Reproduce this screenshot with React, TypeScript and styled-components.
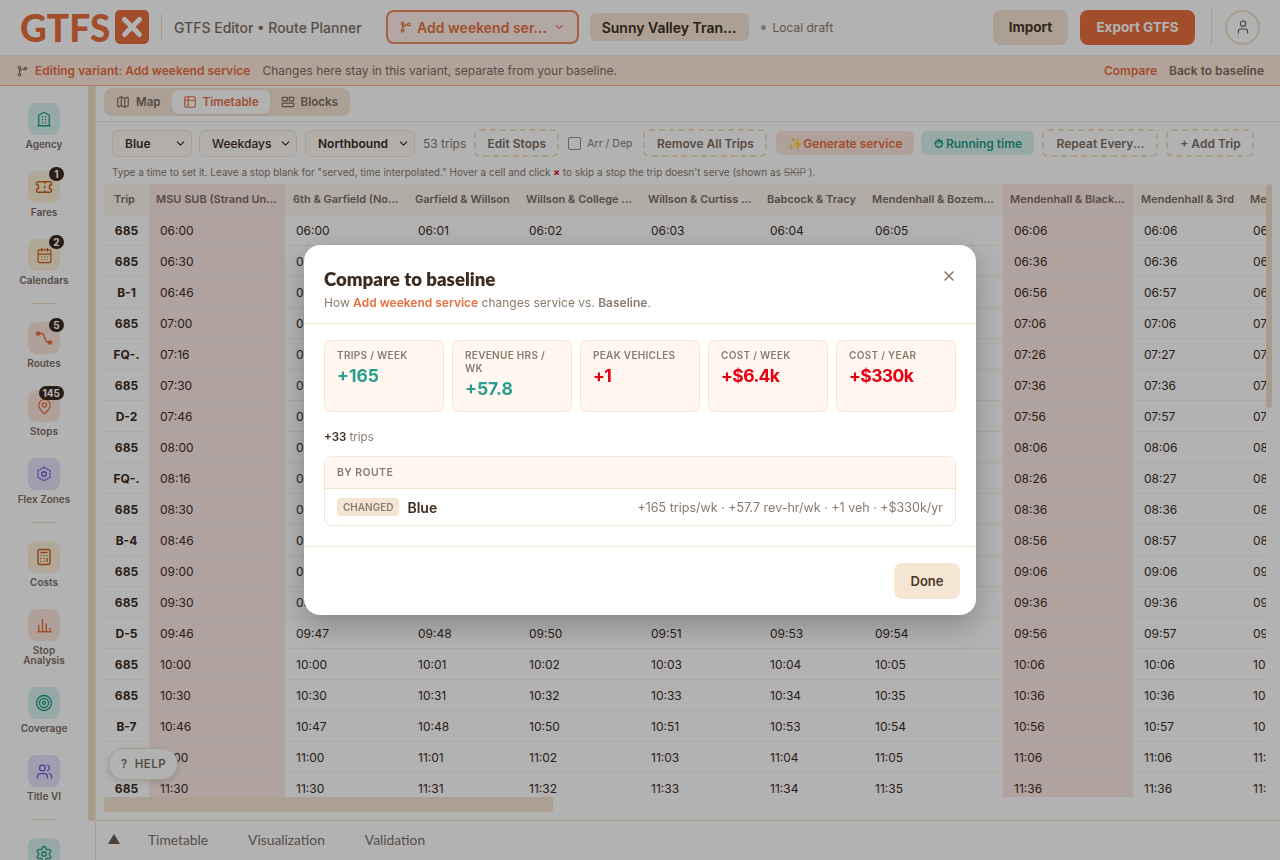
import React from "react";
import styled, { createGlobalStyle } from "styled-components";
import {
  Calculator, CalendarDays, ChevronDown, Map as MapIcon,
  MapPin, Settings, Table2, Target, Ticket, User, Users, X,
} from "lucide-react";

const GlobalStyle = createGlobalStyle`
  html, body, #root { margin: 0; height: 100%; }
  body {
    font-family: Inter, "Liberation Sans", sans-serif;
    color: #3d2c1e;
    background: #fff;
    overflow: hidden;
  }
  * { box-sizing: border-box; }
`;

const Page = styled.div`
  display: flex;
  flex-direction: column;
  height: 860px;
  overflow: hidden;
  position: relative;
`;

const Header = styled.header`
  display: flex;
  align-items: center;
  height: 56px;
  flex: none;
  padding: 0 20px 1px 20px;
  background: #fff;
  border-bottom: 1px solid #f5e6d3;
`;

const Logo = styled.div`
  display: flex;
  align-items: center;
  gap: 5px;
  font-family: Lato, sans-serif;
  font-size: 37px;
  font-weight: 900;
  color: #e8703f;
  line-height: 1;
  width: 129px;
`;

const LogoBox = styled.span`
  display: flex;
  align-items: center;
  justify-content: center;
  width: 34px;
  height: 34px;
  margin-left: auto;
  border-radius: 5px;
  background: #e8703f;
  color: #fff;
`;

const VRule = styled.div<{ $h: number; $ml: number }>`
  width: 1px;
  height: ${(p) => p.$h}px;
  margin-left: ${(p) => p.$ml}px;
  background: #f0dfc9;
`;

const AppTitle = styled.div`
  margin-left: 12px;
  font-size: 14px;
  font-weight: 500;
  color: #7d6e63;
  white-space: nowrap;
`;

const VariantButton = styled.div`
  display: flex;
  align-items: center;
  width: 193px;
  height: 34px;
  margin-left: 24px;
  padding: 0 11px;
  gap: 6px;
  border: 2px solid #f08a62;
  border-radius: 8px;
  background: #fff0e8;
  color: #e8703f;
  font-size: 14px;
  font-weight: 600;
  white-space: nowrap;
`;

const AgencyChip = styled.div`
  display: flex;
  align-items: center;
  justify-content: center;
  width: 159px;
  height: 28px;
  margin-left: 11px;
  border-radius: 6px;
  background: #f5e6d3;
  color: #3d2c1e;
  font-size: 14px;
  font-weight: 600;
  white-space: nowrap;
`;

const Draft = styled.div`
  display: flex;
  align-items: center;
  gap: 7px;
  margin-left: 12px;
  font-size: 12px;
  color: #8a7a6d;

  &::before {
    content: "";
    width: 5px;
    height: 5px;
    border-radius: 50%;
    background: #a9a9a9;
  }
`;

const HeadButton = styled.div<{ $primary?: boolean; $w: number }>`
  display: flex;
  align-items: center;
  justify-content: center;
  width: ${(p) => p.$w}px;
  height: 35px;
  border-radius: 8px;
  font-size: 13.5px;
  font-weight: 700;
  white-space: nowrap;
  background: ${(p) => (p.$primary ? "#e8703f" : "#f5e6d3")};
  color: ${(p) => (p.$primary ? "#fff" : "#4a3728")};
`;

const HeadRight = styled.div`
  display: flex;
  align-items: center;
  margin-left: auto;
  gap: 12px;
`;

const Avatar = styled.div`
  display: flex;
  align-items: center;
  justify-content: center;
  width: 35px;
  height: 35px;
  margin-left: 1px;
  border: 2px solid #f0dfc9;
  border-radius: 50%;
  color: #6b5a4d;
`;

const Banner = styled.div`
  display: flex;
  align-items: center;
  height: 30px;
  flex: none;
  padding: 0 16px;
  background: #ffe9dc;
  border-bottom: 1px solid #f2ab8d;
  font-size: 12px;
  color: #7d6e63;
  white-space: nowrap;
`;

const BannerStrong = styled.span`
  margin-left: 7px;
  margin-right: 12px;
  font-weight: 600;
  color: #e8703f;
`;

const BannerLink = styled.span<{ $accent?: boolean }>`
  margin-left: ${(p) => (p.$accent ? "auto" : "12px")};
  font-weight: 600;
  color: ${(p) => (p.$accent ? "#e8703f" : "#7d6e63")};
`;

const Body = styled.div`
  display: flex;
  flex: 1;
  min-height: 0;
`;

const Sidebar = styled.nav`
  position: relative;
  flex: none;
  width: 96px;
  height: 100%;
  overflow: hidden;
  padding: 17px 7px 0 0;
  display: flex;
  flex-direction: column;
  align-items: center;
  gap: 22px;
  border-right: 1px solid #f5e6d3;
`;

const SideThumb = styled.div`
  position: absolute;
  top: 0;
  right: 0;
  width: 7px;
  height: 735px;
  border-radius: 0 0 3px 3px;
  background: #f0dfc9;
`;

const SideItem = styled.div`
  flex: none;
  display: flex;
  flex-direction: column;
  align-items: center;
  width: 80px;
  font-size: 10px;
  line-height: 10px;
  font-weight: 600;
  text-align: center;
  color: #7d6e63;
`;

const Tile = styled.div<{ $bg: string; $fg: string }>`
  position: relative;
  display: flex;
  align-items: center;
  justify-content: center;
  width: 32px;
  height: 32px;
  margin-bottom: 4px;
  border-radius: 8px;
  background: ${(p) => p.$bg};
  color: ${(p) => p.$fg};
`;

const Count = styled.span`
  position: absolute;
  top: -4px;
  right: -4px;
  min-width: 15px;
  height: 14px;
  padding: 0 4px;
  border-radius: 8px;
  background: #3d2c1e;
  color: #fff;
  font-size: 10px;
  line-height: 14px;
  font-weight: 700;
  text-align: center;
`;

const SideRule = styled.div`
  flex: none;
  width: 25px;
  height: 1px;
  margin: -4px 0;
  background: #f5dcc6;
`;

const Main = styled.main`
  position: relative;
  flex: 1;
  min-width: 0;
  display: flex;
  flex-direction: column;
`;

const ViewBar = styled.div`
  flex: none;
  height: 36px;
  padding: 2px 8px 0;
  border-bottom: 1px solid #f5e6d3;
`;

const ViewTabs = styled.div`
  display: inline-flex;
  align-items: center;
  height: 28px;
  padding: 2px 1px;
  border-radius: 8px;
  background: #f5e6d3;
`;

const ViewTab = styled.div<{ $active?: boolean }>`
  display: flex;
  align-items: center;
  gap: 6px;
  height: 24px;
  padding: 0 11px;
  border-radius: 6px;
  font-size: 11.6px;
  font-weight: 600;
  color: ${(p) => (p.$active ? "#e8703f" : "#7d6e63")};
  background: ${(p) => (p.$active ? "#fff" : "transparent")};
  box-shadow: ${(p) => (p.$active ? "0 1px 2px rgba(0,0,0,.1)" : "none")};
`;

const Toolbar = styled.div`
  flex: none;
  display: flex;
  align-items: center;
  height: 28px;
  margin-top: 7px;
  padding: 0 16px;
  white-space: nowrap;
`;

const Select = styled.div<{ $w: number; $ml: number; $dark?: boolean }>`
  display: flex;
  align-items: center;
  justify-content: space-between;
  flex: none;
  width: ${(p) => p.$w}px;
  height: 27px;
  margin-left: ${(p) => p.$ml}px;
  padding: 0 4px 0 12px;
  border: 1.5px solid #f5e6d3;
  border-radius: 6px;
  background: #fff9f3;
  font-size: 12px;
  font-weight: ${(p) => (p.$dark ? 600 : 500)};
  color: #3d2c1e;
`;

const TripCount = styled.span`
  margin-left: 8px;
  font-size: 12px;
  color: #8a7a6d;
`;

const DashButton = styled.div<{ $w: number; $ml: number }>`
  display: flex;
  align-items: center;
  justify-content: center;
  flex: none;
  width: ${(p) => p.$w}px;
  height: 28px;
  margin-left: ${(p) => p.$ml}px;
  border: 2px dashed #f3dfc6;
  border-radius: 6px;
  font-size: 12px;
  font-weight: 600;
  color: #7d6e63;
`;

const FillButton = styled.div<{ $w: number; $ml: number; $bg: string; $fg: string }>`
  display: flex;
  align-items: center;
  justify-content: center;
  gap: 1px;
  flex: none;
  width: ${(p) => p.$w}px;
  height: 24px;
  margin-left: ${(p) => p.$ml}px;
  border-radius: 6px;
  background: ${(p) => p.$bg};
  color: ${(p) => p.$fg};
  font-size: 12px;
  font-weight: 600;
`;

const CheckLabel = styled.label`
  display: flex;
  align-items: center;
  gap: 6px;
  margin-left: 9px;
  font-size: 10.5px;
  color: #8a7a6d;
`;

const Box = styled.span`
  width: 13px;
  height: 13px;
  border: 1px solid #8f8f8f;
  border-radius: 2px;
  background: #fff;
`;

const Hint = styled.div`
  flex: none;
  height: 14px;
  margin-top: 8px;
  padding-left: 16px;
  font-size: 10px;
  line-height: 14px;
  color: #8a7a6d;
  white-space: nowrap;
`;

const SkipX = styled.b`
  color: #e60012;
`;

const SkipWord = styled.s`
  color: #a89a8e;
`;

const TableWrap = styled.div`
  position: relative;
  flex: 1;
  min-height: 0;
  margin: 5px 8px 0;
  overflow: hidden;
`;

const Row = styled.div<{ $head?: boolean }>`
  display: grid;
  grid-template-columns: 45px 136px 122px 111px 122px 119px 105px 139px 130px 109px 60px;
  height: 31px;
  border-bottom: 1px solid #f7f1ea;
  font-size: ${(p) => (p.$head ? "11px" : "12px")};
  font-weight: ${(p) => (p.$head ? 600 : 400)};
  color: ${(p) => (p.$head ? "#7d6e63" : "#3d2c1e")};
`;

const Cell = styled.div<{ $shade?: boolean; $head?: boolean; $trip?: boolean }>`
  display: flex;
  align-items: center;
  justify-content: ${(p) => (p.$trip ? "center" : "flex-start")};
  padding: ${(p) => (p.$head ? (p.$shade ? "0 6px 0 7px" : p.$trip ? "0 4px 0 0" : "0 4px 0 8px") : "0 11px")};
  min-width: 0;
  overflow: hidden;
  white-space: nowrap;
  font-weight: ${(p) => (p.$trip && !p.$head ? 700 : "inherit")};
  background: ${(p) => (p.$shade ? "#fbe9e4" : p.$head ? "#fff7ee" : "transparent")};
`;

const HeadText = styled.span`
  overflow: hidden;
  text-overflow: ellipsis;
`;

const HTrack = styled.div`
  position: absolute;
  left: 0;
  right: 0;
  bottom: 0;
  height: 23px;
  background: #fff;
`;

const HThumb = styled.div`
  width: 449px;
  height: 15px;
  border-radius: 2px;
  background: #f5e6d3;
`;

const VTrack = styled.div`
  position: absolute;
  top: 0;
  right: 0;
  bottom: 0;
  width: 6px;
  background: #fff;
`;

const VThumb = styled.div`
  height: 224px;
  border-radius: 3px;
  background: #f0dfc9;
`;

const Help = styled.div`
  position: absolute;
  left: 12px;
  top: 662px;
  display: flex;
  align-items: center;
  gap: 7px;
  width: 70px;
  height: 32px;
  padding-left: 12px;
  border: 1px solid #f5dcc6;
  border-radius: 16px;
  background: #fff;
  box-shadow: 0 2px 6px rgba(0,0,0,.12);
  font-size: 11.5px;
  font-weight: 600;
  letter-spacing: .5px;
  color: #7d6e63;
  z-index: 3;
`;

const BottomBar = styled.div`
  flex: none;
  display: flex;
  align-items: center;
  height: 40px;
  padding: 0 0 3px 12px;
  border-top: 1px solid #f5dcc6;
  font-family: Lato, sans-serif;
  font-size: 13.8px;
  color: #7d6e63;
`;

const Triangle = styled.span`
  width: 0;
  height: 0;
  margin-right: 28px;
  border-left: 6px solid transparent;
  border-right: 6px solid transparent;
  border-bottom: 10px solid #6b5a4d;
`;

const BottomTab = styled.span`
  margin-right: 40px;
`;

const Overlay = styled.div`
  position: fixed;
  inset: 0;
  display: flex;
  align-items: center;
  justify-content: center;
  background: rgba(0, 0, 0, 0.3);
  backdrop-filter: blur(0.5px);
  z-index: 10;
`;

const Modal = styled.div`
  position: relative;
  width: 672px;
  border-radius: 16px;
  background: #fff;
  box-shadow: 0 10px 30px rgba(0, 0, 0, 0.25);
`;

const ModalHead = styled.div`
  height: 79px;
  padding: 23px 20px 0;
  border-bottom: 1px solid #f5e6d3;
`;

const ModalTitle = styled.h2`
  margin: 0;
  font-family: Lato, sans-serif;
  font-size: 18.6px;
  line-height: 22px;
  font-weight: 800;
  color: #3d2c1e;
`;

const ModalSub = styled.p`
  margin: 5px 0 0;
  font-size: 12px;
  line-height: 16px;
  color: #8a7a6d;
`;

const SubAccent = styled.b`
  color: #e8703f;
  font-weight: 600;
`;

const SubStrong = styled.b`
  font-weight: 600;
`;

const CloseBtn = styled.div`
  position: absolute;
  top: 23px;
  right: 19px;
  color: #8a7a6d;
  line-height: 0;
`;

const ModalBody = styled.div`
  padding: 16px 20px 20px;
`;

const Stats = styled.div`
  display: grid;
  grid-template-columns: repeat(5, 1fr);
  gap: 8px;
`;

const Stat = styled.div`
  height: 72px;
  padding: 8px 12px;
  border: 1px solid #f5e6d3;
  border-radius: 8px;
  background: #fff7f0;
`;

const StatLabel = styled.div`
  font-size: 10px;
  line-height: 13px;
  font-weight: 600;
  letter-spacing: 0.3px;
  text-transform: uppercase;
  color: #8a7a6d;
`;

const StatValue = styled.div<{ $bad?: boolean }>`
  margin-top: 3px;
  font-size: 17.5px;
  line-height: 22px;
  font-weight: 700;
  letter-spacing: ${(p) => (p.$bad ? "-0.6px" : "0")};
  color: ${(p) => (p.$bad ? "#e60012" : "#2a9d8f")};
`;

const Note = styled.div`
  margin-top: 17px;
  font-size: 11.5px;
  line-height: 16px;
  color: #8a7a6d;

  b {
    font-weight: 600;
    color: #3d2c1e;
  }
`;

const RouteBox = styled.div`
  margin-top: 11px;
  border: 1px solid #f5e6d3;
  border-radius: 8px;
  overflow: hidden;
`;

const RouteHead = styled.div`
  height: 32px;
  padding: 1px 12px 0;
  background: #fff7f0;
  border-bottom: 1px solid #f5e6d3;
  font-size: 10.5px;
  line-height: 30px;
  font-weight: 600;
  letter-spacing: 0.4px;
  color: #8a7a6d;
`;

const RouteRow = styled.div`
  display: flex;
  align-items: center;
  height: 36px;
  padding: 0 12px;
`;

const Badge = styled.span`
  padding: 0 6px;
  height: 18px;
  border-radius: 4px;
  background: #f5e6d3;
  font-size: 10px;
  line-height: 18px;
  font-weight: 600;
  color: #8a7a6d;
`;

const RouteName = styled.span`
  margin-left: 8px;
  font-size: 14px;
  font-weight: 600;
`;

const RouteStats = styled.span`
  margin-left: auto;
  font-size: 12.5px;
  color: #8a7a6d;
`;

const ModalFoot = styled.div`
  display: flex;
  justify-content: flex-end;
  padding: 16px;
  border-top: 1px solid #f5e6d3;
`;

const DoneBtn = styled.div`
  display: flex;
  align-items: center;
  justify-content: center;
  width: 66px;
  height: 36px;
  border-radius: 8px;
  background: #f5e6d3;
  font-size: 13px;
  font-weight: 600;
  color: #4a3728;
`;

const BranchIcon = ({ size = 14 }: { size?: number }) => (
  <svg width={size} height={size} viewBox="0 0 24 24" fill="none" stroke="currentColor" strokeWidth="2.2" strokeLinecap="round">
    <circle cx="7" cy="5" r="2.6" />
    <circle cx="7" cy="19" r="2.6" />
    <circle cx="19" cy="7" r="2.6" />
    <path d="M7 8v8M16.4 7.5C12 8 9 10 7.5 13" />
  </svg>
);

const RowsIcon = () => (
  <svg width="14" height="14" viewBox="0 0 24 24" fill="none" stroke="currentColor" strokeWidth="2">
    <rect x="2" y="4" width="9" height="6" rx="1.5" />
    <rect x="14" y="4" width="8" height="6" rx="1.5" />
    <rect x="2" y="14" width="20" height="6" rx="1.5" />
  </svg>
);

const BuildingIcon = () => (
  <svg width="18" height="18" viewBox="0 0 24 24" fill="none" stroke="currentColor" strokeWidth="1.7" strokeLinejoin="round">
    <path d="M3 21h18M5 21V7l7-4 7 4v14" />
    <path d="M10 9h.01M14 9h.01M10 13h.01M14 13h.01M10 17h.01M14 17h.01" strokeWidth="2" strokeLinecap="round" />
  </svg>
);

const RouteIcon = () => (
  <svg width="18" height="18" viewBox="0 0 24 24" fill="none" stroke="currentColor" strokeWidth="1.8">
    <circle cx="4" cy="6" r="2.2" fill="currentColor" />
    <circle cx="20" cy="18" r="2.2" fill="currentColor" />
    <path d="M6 6h3c3 0 3 3 4 6s2 6 5 6" />
  </svg>
);

const BarsIcon = () => (
  <svg width="18" height="18" viewBox="0 0 24 24" fill="none" stroke="currentColor" strokeWidth="1.8">
    <path d="M3 21h19M5 21v-9M10 21V4M15 21v-11M20 21v-5" />
  </svg>
);

const FlexIcon = () => (
  <svg width="18" height="18" viewBox="0 0 24 24" fill="none" stroke="currentColor" strokeWidth="1.8" strokeLinejoin="round">
    <path d="M12 3l8 4.5v9L12 21l-8-4.5v-9z" strokeDasharray="3 1" />
    <circle cx="12" cy="12" r="3" />
  </svg>
);

type NavEntry = { label: React.ReactNode; icon: React.ReactNode; bg: string; fg: string; count?: number } | "rule";

const amber = { bg: "#fdf0d9", fg: "#c8621a" };
const rose = { bg: "#fde6dd", fg: "#e8703f" };
const teal = { bg: "#d9f2ee", fg: "#1f9b88" };
const violet = { bg: "#e6e1fb", fg: "#7357db" };

const nav: NavEntry[] = [
  { label: "Agency", icon: <BuildingIcon />, ...teal },
  { label: "Fares", icon: <Ticket size={18} strokeWidth={1.8} />, count: 1, ...amber },
  { label: "Calendars", icon: <CalendarDays size={17} strokeWidth={1.7} />, count: 2, ...amber },
  "rule",
  { label: "Routes", icon: <RouteIcon />, count: 5, ...rose },
  { label: "Stops", icon: <MapPin size={17} strokeWidth={1.8} />, count: 145, ...rose },
  { label: "Flex Zones", icon: <FlexIcon />, ...violet },
  "rule",
  { label: "Costs", icon: <Calculator size={18} strokeWidth={1.8} />, ...amber },
  { label: <>Stop<br />Analysis</>, icon: <BarsIcon />, ...rose },
  { label: "Coverage", icon: <Target size={18} strokeWidth={1.7} />, ...teal },
  { label: "Title VI", icon: <Users size={17} strokeWidth={1.8} />, ...violet },
  "rule",
  { label: "Settings", icon: <Settings size={18} strokeWidth={1.8} />, ...teal },
];

const columns = [
  "MSU SUB (Strand Union)", "6th & Garfield (Northbound)", "Garfield & Willson", "Willson & College Street",
  "Willson & Curtiss Street", "Babcock & Tracy", "Mendenhall & Bozeman Ave", "Mendenhall & Black Ave",
  "Mendenhall & 3rd", "Mendenhall & Rouse",
];

const loop = [0, 0, 1, 2, 3, 4, 5, 6, 6, 7];
const express = [0, 1, 2, 4, 5, 7, 8, 10, 11, 12];

const trips: [string, string][] = [
  ["685", "06:00"], ["685", "06:30"], ["B-1", "06:46"], ["685", "07:00"], ["FQ-.", "07:16"],
  ["685", "07:30"], ["D-2", "07:46"], ["685", "08:00"], ["FQ-.", "08:16"], ["685", "08:30"],
  ["B-4", "08:46"], ["685", "09:00"], ["685", "09:30"], ["D-5", "09:46"], ["685", "10:00"],
  ["685", "10:30"], ["B-7", "10:46"], ["685", "11:00"], ["685", "11:30"],
];

const addMinutes = (time: string, mins: number) => {
  const [h, m] = time.split(":").map(Number);
  const total = h * 60 + m + mins;
  return `${String(Math.floor(total / 60)).padStart(2, "0")}:${String(total % 60).padStart(2, "0")}`;
};

const shaded = (i: number) => i === 0 || i === 7;

export default function App() {
  return (
    <Page>
      <GlobalStyle />
      <Header>
        <Logo>
          GTFS
          <LogoBox><X size={30} strokeWidth={4} /></LogoBox>
        </Logo>
        <VRule $h={26} $ml={12} />
        <AppTitle>GTFS Editor • Route Planner</AppTitle>
        <VariantButton>
          <BranchIcon />
          <span>Add weekend ser...</span>
          <ChevronDown size={14} style={{ marginLeft: "auto" }} />
        </VariantButton>
        <AgencyChip>Sunny Valley Tran...</AgencyChip>
        <Draft>Local draft</Draft>
        <HeadRight>
          <HeadButton $w={75}>Import</HeadButton>
          <HeadButton $w={115} $primary>Export GTFS</HeadButton>
          <VRule $h={35} $ml={4} />
          <Avatar><User size={16} strokeWidth={1.6} /></Avatar>
        </HeadRight>
      </Header>
      <Banner>
        <BranchIcon size={12} />
        <BannerStrong>Editing variant: Add weekend service</BannerStrong>
        Changes here stay in this variant, separate from your baseline.
        <BannerLink $accent>Compare</BannerLink>
        <BannerLink>Back to baseline</BannerLink>
      </Banner>
      <Body>
        <Sidebar>
          <SideThumb />
          {nav.map((item, i) =>
            item === "rule" ? (
              <SideRule key={i} />
            ) : (
              <SideItem key={i}>
                <Tile $bg={item.bg} $fg={item.fg}>
                  {item.icon}
                  {item.count !== undefined && <Count>{item.count}</Count>}
                </Tile>
                {item.label}
              </SideItem>
            )
          )}
        </Sidebar>
        <Main>
          <ViewBar>
            <ViewTabs>
              <ViewTab><MapIcon size={14} />Map</ViewTab>
              <ViewTab $active><Table2 size={14} />Timetable</ViewTab>
              <ViewTab><RowsIcon />Blocks</ViewTab>
            </ViewTabs>
          </ViewBar>
          <Toolbar>
            <Select $w={80} $ml={0} $dark>Blue<ChevronDown size={13} /></Select>
            <Select $w={98} $ml={7}>Weekdays<ChevronDown size={13} /></Select>
            <Select $w={110} $ml={8} $dark>Northbound<ChevronDown size={13} /></Select>
            <TripCount>53 trips</TripCount>
            <DashButton $w={85} $ml={8}>Edit Stops</DashButton>
            <CheckLabel><Box />Arr / Dep</CheckLabel>
            <DashButton $w={124} $ml={11}>Remove All Trips</DashButton>
            <FillButton $w={138} $ml={9} $bg="#fde6dd" $fg="#e8703f">✨Generate service</FillButton>
            <FillButton $w={113} $ml={7} $bg="#d9f2ee" $fg="#1f9b88">⏱ Running time</FillButton>
            <DashButton $w={116} $ml={8}>Repeat Every...</DashButton>
            <DashButton $w={88} $ml={8}>+ Add Trip</DashButton>
          </Toolbar>
          <Hint>
            Type a time to set it. Leave a stop blank for "served, time interpolated." Hover a cell and click <SkipX>×</SkipX> to skip a stop the trip doesn't serve (shown as <SkipWord>SKIP</SkipWord> ).
          </Hint>
          <TableWrap>
            <Row $head>
              <Cell $head $trip>Trip</Cell>
              {columns.map((c, i) => (
                <Cell key={c} $head $shade={shaded(i)}><HeadText>{c}</HeadText></Cell>
              ))}
            </Row>
            {trips.map(([name, start], r) => {
              const offsets = name === "685" ? loop : express;
              return (
                <Row key={r}>
                  <Cell $trip>{name}</Cell>
                  {offsets.map((o, i) => (
                    <Cell key={i} $shade={shaded(i)}>{addMinutes(start, o)}</Cell>
                  ))}
                </Row>
              );
            })}
            <HTrack><HThumb /></HTrack>
            <VTrack><VThumb /></VTrack>
          </TableWrap>
          <BottomBar>
            <Triangle />
            <BottomTab>Timetable</BottomTab>
            <BottomTab>Visualization</BottomTab>
            <BottomTab>Validation</BottomTab>
          </BottomBar>
          <Help><span>?</span><span>HELP</span></Help>
        </Main>
      </Body>
      <Overlay>
        <Modal>
          <ModalHead>
            <ModalTitle>Compare to baseline</ModalTitle>
            <ModalSub>
              How <SubAccent>Add weekend service</SubAccent> changes service vs. <SubStrong>Baseline</SubStrong>.
            </ModalSub>
            <CloseBtn><X size={16} strokeWidth={2.4} /></CloseBtn>
          </ModalHead>
          <ModalBody>
            <Stats>
              <Stat><StatLabel>Trips / week</StatLabel><StatValue>+165</StatValue></Stat>
              <Stat><StatLabel>Revenue hrs / wk</StatLabel><StatValue>+57.8</StatValue></Stat>
              <Stat><StatLabel>Peak vehicles</StatLabel><StatValue $bad>+1</StatValue></Stat>
              <Stat><StatLabel>Cost / week</StatLabel><StatValue $bad>+$6.4k</StatValue></Stat>
              <Stat><StatLabel>Cost / year</StatLabel><StatValue $bad>+$330k</StatValue></Stat>
            </Stats>
            <Note><b>+33</b> trips</Note>
            <RouteBox>
              <RouteHead>BY ROUTE</RouteHead>
              <RouteRow>
                <Badge>CHANGED</Badge>
                <RouteName>Blue</RouteName>
                <RouteStats>+165 trips/wk · +57.7 rev-hr/wk · +1 veh · +$330k/yr</RouteStats>
              </RouteRow>
            </RouteBox>
          </ModalBody>
          <ModalFoot>
            <DoneBtn>Done</DoneBtn>
          </ModalFoot>
        </Modal>
      </Overlay>
    </Page>
  );
}
